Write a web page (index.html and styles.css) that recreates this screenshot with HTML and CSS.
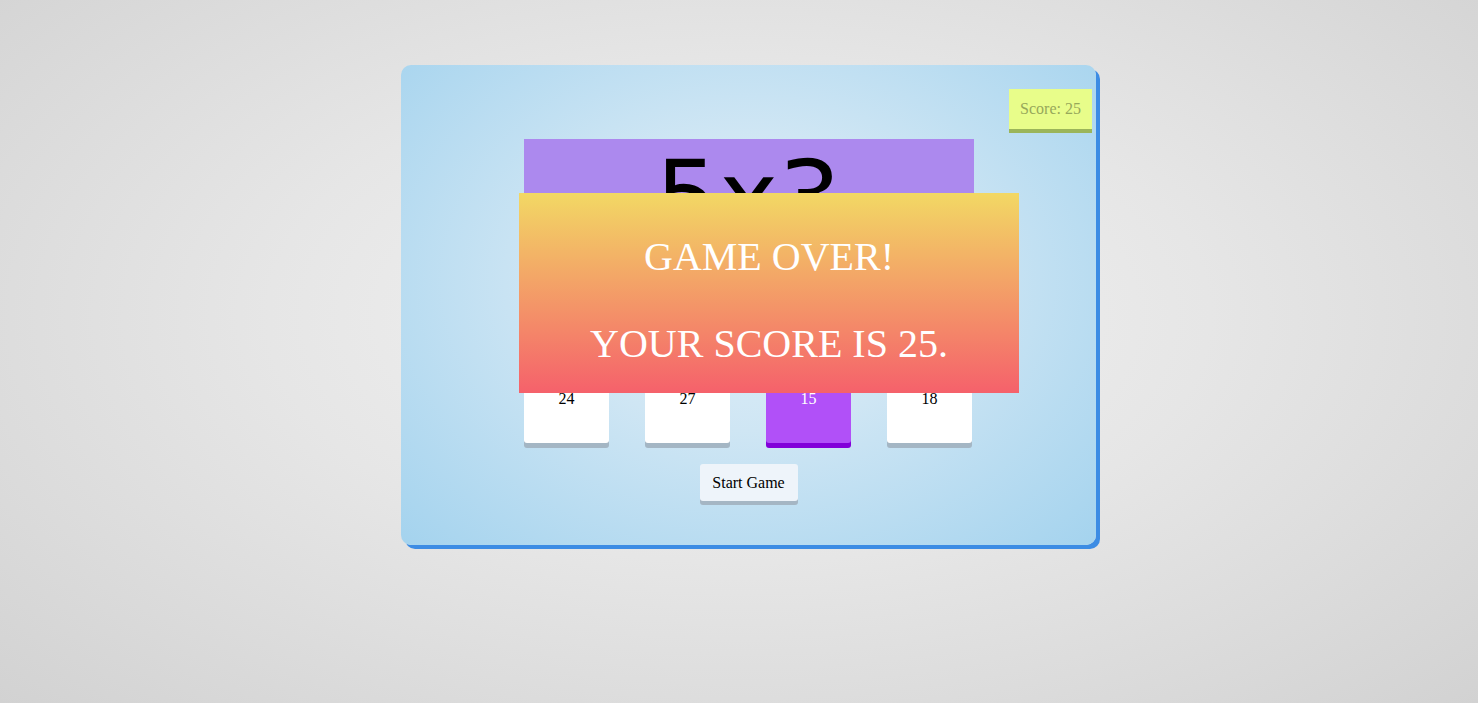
FILE: index.html
```html
<!DOCTYPE html>
<html>
<head>
<meta charset="utf-8">
<title>Multiplication Game</title>
<link rel="stylesheet" href="styles.css">
</head>
<body>
<div class="container">
  <div class="score">Score: 25</div>
  <div class="question">5x3</div>
  <div class="choices">
    <div class="box">24</div>
    <div class="box">27</div>
    <div class="box box-active">15</div>
    <div class="box">18</div>
  </div>
  <div class="start">Start Game</div>
  <div class="gameover">
    <p>Game over!</p>
    <p>Your score is 25.</p>
  </div>
</div>
</body>
</html>
```
FILE: styles.css
```css
html, body {
  margin: 0;
  height: 100%;
}
body {
  background: radial-gradient(ellipse at 50% 45%, #f3f3f3 0%, #e6e6e6 45%, #d2d2d2 100%);
  font-family: "Liberation Serif", "Times New Roman", serif;
  font-size: 16px;
  overflow: hidden;
}
.container {
  position: relative;
  box-sizing: border-box;
  width: 695px;
  height: 480px;
  margin: 65px 0 0 401px;
  border-radius: 10px;
  background: radial-gradient(ellipse at 50% 45%, #e2f0f9 0%, #cfe6f4 40%, #a4d3ee 100%);
  box-shadow: 4px 4px 0 #3c8ce4;
  display: flex;
  flex-direction: column;
  align-items: center;
  padding-top: 24px;
}
.score {
  align-self: flex-end;
  margin-right: 4px;
  width: 83px;
  height: 40px;
  box-sizing: border-box;
  background: #e8fd8a;
  color: #97a85a;
  box-shadow: 0 4px 0 #9bb55a;
  text-align: center;
  line-height: 40px;
}
.question {
  margin-top: 10px;
  width: 450px;
  height: 150px;
  background: #ac89ee;
  color: #000;
  font-family: "DejaVu Sans", sans-serif;
  font-size: 100px;
  text-align: center;
}
.choices {
  align-self: flex-start;
  margin: 69px 0 0 123px;
  display: flex;
  gap: 36px;
}
.box {
  width: 85px;
  height: 85px;
  background: #fff;
  border-radius: 3px;
  box-shadow: 0 5px 0 #a4b6c4;
  text-align: center;
  line-height: 81px;
  color: #000;
}
.box-active {
  background: #b150f8;
  color: #fff;
  box-shadow: 0 5px 0 #8200d9;
}
.start {
  margin-top: 21px;
  width: 98px;
  height: 37px;
  box-sizing: border-box;
  background: #eef4fa;
  border-radius: 3px;
  box-shadow: 0 4px 0 #a5b6c4;
  text-align: center;
  line-height: 37px;
  color: #000;
}
.gameover {
  position: absolute;
  left: 118px;
  top: 128px;
  width: 500px;
  height: 200px;
  overflow: hidden;
  background: linear-gradient(#f2d864, #f5616b);
  color: #fff;
  font-size: 40px;
  text-align: center;
  text-transform: uppercase;
}
.gameover p {
  margin: 40px 0;
}
```
